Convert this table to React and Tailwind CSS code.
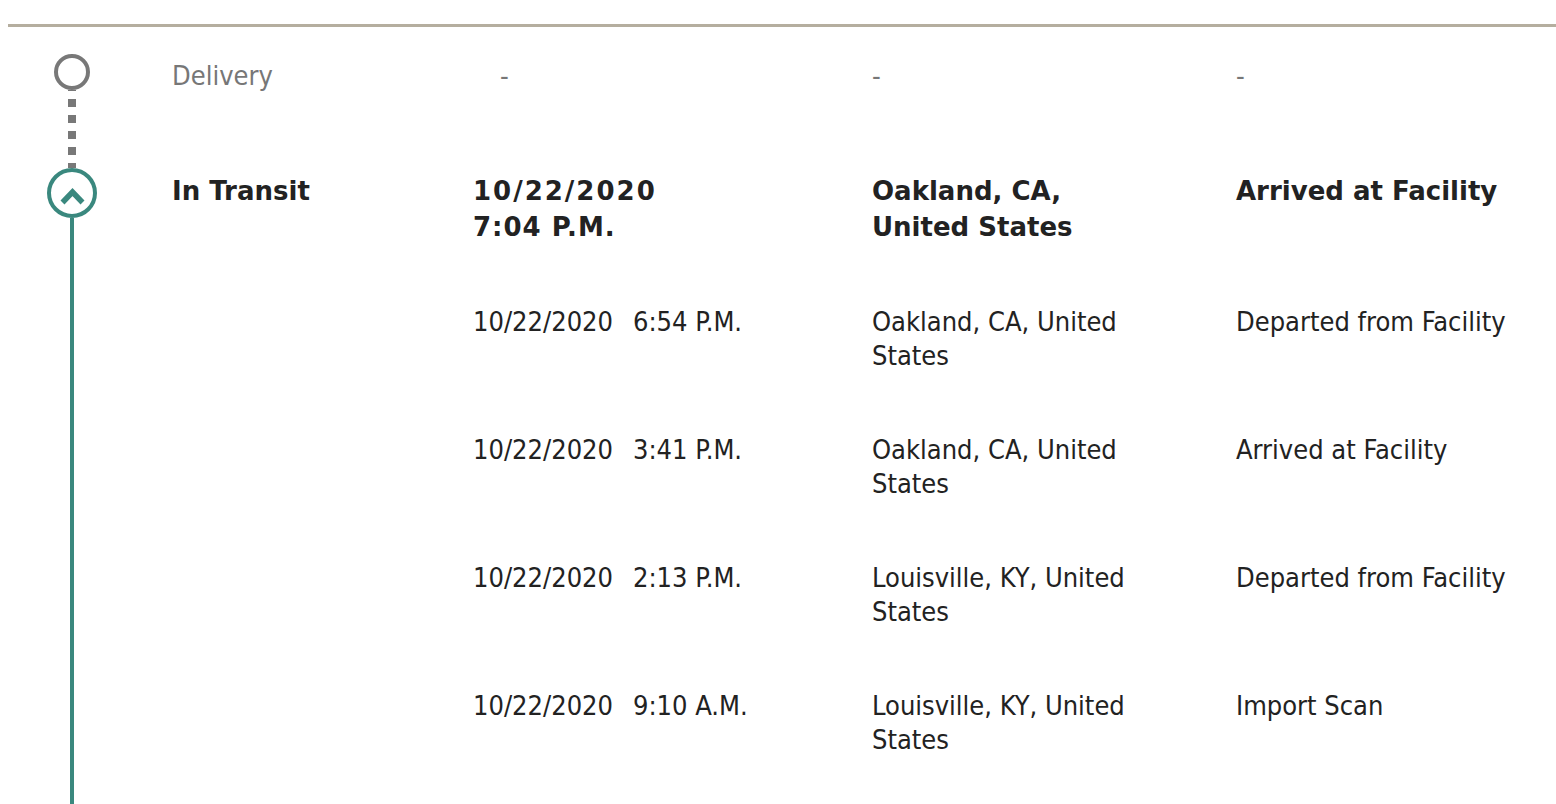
const events = [
  { date: '10/22/2020', time: '6:54 P.M.', place: 'Oakland, CA, United States', activity: 'Departed from Facility' },
  { date: '10/22/2020', time: '3:41 P.M.', place: 'Oakland, CA, United States', activity: 'Arrived at Facility' },
  { date: '10/22/2020', time: '2:13 P.M.', place: 'Louisville, KY, United States', activity: 'Departed from Facility' },
  { date: '10/22/2020', time: '9:10 A.M.', place: 'Louisville, KY, United States', activity: 'Import Scan' },
]

const regular = "font-['DejaVu_Sans_Condensed','DejaVu_Sans',sans-serif] font-stretch-condensed text-[27px] leading-[34px]"
const bold = "font-['DejaVu_Sans',sans-serif] font-bold text-[26px] leading-[36px]"

export default function App() {
  return (
    <div className="min-h-screen bg-white pl-2 pt-6 text-[#222]">
      <div className="h-[3px] bg-[#b5ae9f]" />

      <div className="pt-[27px]">
        {/* Delivery step */}
        <div className="grid grid-cols-[128px_1fr] gap-x-9">
          <div className="flex flex-col items-center">
            <div className="w-9 h-9 shrink-0 rounded-full border-4 border-[#787878]" />
            <div className="w-2 flex-1 bg-[repeating-linear-gradient(to_bottom,#787878_0px,#787878_1px,transparent_1px,transparent_9px,#787878_9px,#787878_16px)]" />
          </div>
          <div className={`grid grid-cols-[301px_399px_364px_1fr] pt-[5px] pb-[75px] text-[#777] ${regular}`}>
            <div>Delivery</div>
            <div className="pl-[27px]">-</div>
            <div>-</div>
            <div>-</div>
          </div>
        </div>

        {/* In Transit step */}
        <div className="grid grid-cols-[128px_1fr] gap-x-9">
          <div className="flex flex-col items-center">
            <svg width="50" height="50" viewBox="0 0 50 50" className="shrink-0">
              <circle cx="25" cy="25" r="23" fill="none" stroke="#3a887e" strokeWidth="4" />
              <path d="M15.5 34.5 L25.5 24 L35.5 34.5" fill="none" stroke="#3a887e" strokeWidth="5.5" strokeLinecap="butt" strokeLinejoin="miter" />
            </svg>
            <div className="w-1 flex-1 bg-[#3a887e]" />
          </div>
          <div className="pt-[5px] pb-20">
            <div className={`grid grid-cols-[301px_399px_364px_1fr] ${bold}`}>
              <div>In Transit</div>
              <div>
                <div className="tracking-[2px]">10/22/2020</div>
                <div className="tracking-[1px]">7:04 P.M.</div>
              </div>
              <div className="w-[275px]">Oakland, CA, United States</div>
              <div>Arrived at Facility</div>
            </div>

            <div className="mt-[60px] flex flex-col gap-[60px]">
              {events.map((e, i) => (
                <div key={i} className={`grid grid-cols-[301px_399px_364px_1fr] ${regular}`}>
                  <div />
                  <div className="flex gap-5">
                    <span>{e.date}</span>
                    <span>{e.time}</span>
                  </div>
                  <div className="w-[275px]">{e.place}</div>
                  <div>{e.activity}</div>
                </div>
              ))}
            </div>
          </div>
        </div>
      </div>
    </div>
  )
}
